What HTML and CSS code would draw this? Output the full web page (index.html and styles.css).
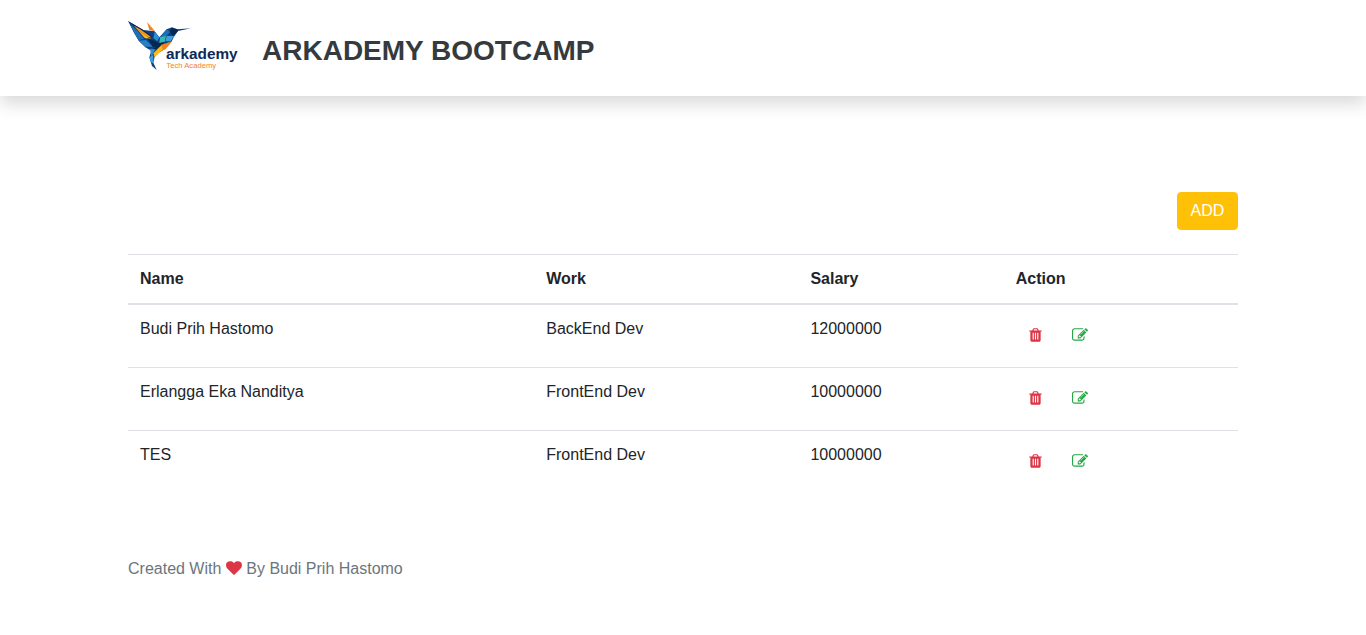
FILE: index.html
```html
<!DOCTYPE html>
<html lang="en">
<head>
<meta charset="utf-8">
<meta name="viewport" content="width=device-width, initial-scale=1">
<title>Arkademy Bootcamp</title>
<link rel="stylesheet" href="styles.css">
</head>
<body>
<svg class="sprite" aria-hidden="true">
  <symbol id="trash" viewBox="192 0 1408 1792"><path d="M704 1376v-704q0-14-9-23t-23-9h-64q-14 0-23 9t-9 23v704q0 14 9 23t23 9h64q14 0 23-9t9-23zm256 0v-704q0-14-9-23t-23-9h-64q-14 0-23 9t-9 23v704q0 14 9 23t23 9h64q14 0 23-9t9-23zm256 0v-704q0-14-9-23t-23-9h-64q-14 0-23 9t-9 23v704q0 14 9 23t23 9h64q14 0 23-9t9-23zm-544-992h448l-48-117q-7-9-17-11h-317q-10 2-17 11zm928 32v64q0 14-9 23t-23 9h-96v948q0 83-47 143.5t-113 60.5h-832q-66 0-113-58.5t-47-141.5v-952h-96q-14 0-23-9t-9-23v-64q0-14 9-23t23-9h309l70-167q15-37 54-63t79-26h320q40 0 79 26t54 63l70 167h309q14 0 23 9t9 23z"/></symbol>
  <symbol id="edit" viewBox="0 0 1792 1792"><path d="M888 1184l116-116-152-152-116 116v56h96v96h56zm440-720q-16-16-33 1l-350 350q-17 17-1 33t33-1l350-350q17-17 1-33zm80 594v190q0 119-84.5 203.5t-203.5 84.5h-832q-119 0-203.5-84.5t-84.5-203.5v-832q0-119 84.5-203.5t203.5-84.5h832q63 0 117 25 15 7 18 23 3 17-9 29l-49 49q-14 14-32 8-23-6-45-6h-832q-66 0-113 47t-47 113v832q0 66 47 113t113 47h832q66 0 113-47t47-113v-126q0-13 9-22l64-64q15-15 35-7t20 29zm-96-738l288 288-672 672h-288v-288zm444 132l-92 92-288-288 92-92q28-28 68-28t68 28l152 152q28 28 28 68t-28 68z"/></symbol>
  <symbol id="heart" viewBox="0 0 1792 1792"><path d="M896 1664q-26 0-44-18l-624-602q-10-8-27.5-26t-55.5-65.5-68-97.5-53.5-121-23.5-138q0-220 127-344t351-124q62 0 126.5 21.5t120 58 95.5 68.5 76 68q36-36 76-68t95.5-68.5 120-58 126.5-21.5q224 0 351 124t127 344q0 221-229 450l-623 600q-18 18-44 18z"/></symbol>
</svg>

<header class="navbar">
  <div class="container brand">
    <svg class="logo" viewBox="12 12 330 156" role="img" aria-label="arkademy Tech Academy">
      <!-- silhouette -->
      <path fill="#0e417c" d="M12 15L58 42L92 46L106 64L128 40L144 34L160 40L201 37L162 45L150 62L142 78L124 98L104 110L92 122L88 140L98 162L84 150L76 124L82 104L64 94L44 74L30 50Z"/>
      <!-- wing -->
      <path fill="#08264f" d="M12 15L58 42L86 62L72 62L44 40Z"/>
      <path fill="#f7941d" d="M30 29L52 42L82 64L66 62L46 48Z"/>
      <path fill="#fdb913" d="M46 48L66 60L82 70L62 66Z"/>
      <path fill="#1c6fb8" d="M18 24L40 44L60 68L44 72L30 50Z"/>
      <path fill="#2680c9" d="M44 74L66 72L86 92L64 92Z"/>
      <path fill="#08264f" d="M70 66L94 76L108 84L88 94Z"/>
      <!-- back feather -->
      <path fill="#f58220" d="M69 18L93 46L76 42Z"/>
      <path fill="#2d8fd5" d="M92 48L106 64L100 76L88 66Z"/>
      <!-- head -->
      <path fill="#1c6fb8" d="M108 64L128 40L138 48L128 60Z"/>
      <path fill="#08264f" d="M142 36L160 40L162 45L148 60L138 48Z"/>
      <!-- body -->
      <path fill="#35b9ad" d="M108 64L126 59L122 78L106 82Z"/>
      <path fill="#3a9ee0" d="M128 60L150 60L140 76L124 76Z"/>
      <path fill="#08264f" d="M102 82L122 78L108 92L86 104Z"/>
      <path fill="#f58220" d="M112 86L144 76L126 98L104 110Z"/>
      <path fill="#fdb913" d="M88 112L112 88L116 100L92 124Z"/>
      <!-- tail -->
      <path fill="#2d8fd5" d="M78 98L94 100L86 114L82 122Z"/>
      <path fill="#3a9ee0" d="M76 124L88 116L88 142L80 138Z"/>
      <text class="logo-name" x="126" y="130">arkademy</text>
      <text class="logo-tag" x="127" y="155">Tech Academy</text>
    </svg>
    <h1 class="title">ARKADEMY BOOTCAMP</h1>
  </div>
</header>

<main class="container content">
  <div class="toolbar">
    <button type="button" class="btn btn-add">ADD</button>
  </div>
  <table class="table">
    <thead>
      <tr>
        <th scope="col" class="col-name">Name</th>
        <th scope="col" class="col-work">Work</th>
        <th scope="col" class="col-salary">Salary</th>
        <th scope="col">Action</th>
      </tr>
    </thead>
    <tbody>
      <tr>
        <td>Budi Prih Hastomo</td>
        <td>BackEnd Dev</td>
        <td>12000000</td>
        <td><div class="actions">
          <button type="button" class="btn btn-delete" aria-label="Delete"><svg class="icon-trash"><use href="#trash"/></svg></button>
          <button type="button" class="btn btn-edit" aria-label="Edit"><svg class="icon"><use href="#edit"/></svg></button>
        </div></td>
      </tr>
      <tr>
        <td>Erlangga Eka Nanditya</td>
        <td>FrontEnd Dev</td>
        <td>10000000</td>
        <td><div class="actions">
          <button type="button" class="btn btn-delete" aria-label="Delete"><svg class="icon-trash"><use href="#trash"/></svg></button>
          <button type="button" class="btn btn-edit" aria-label="Edit"><svg class="icon"><use href="#edit"/></svg></button>
        </div></td>
      </tr>
      <tr>
        <td>TES</td>
        <td>FrontEnd Dev</td>
        <td>10000000</td>
        <td><div class="actions">
          <button type="button" class="btn btn-delete" aria-label="Delete"><svg class="icon-trash"><use href="#trash"/></svg></button>
          <button type="button" class="btn btn-edit" aria-label="Edit"><svg class="icon"><use href="#edit"/></svg></button>
        </div></td>
      </tr>
    </tbody>
  </table>
</main>

<footer class="container footer">Created With <svg class="icon icon-heart" role="img" aria-label="love"><use href="#heart"/></svg> By Budi Prih Hastomo</footer>
</body>
</html>
```
FILE: styles.css
```css
*, *::before, *::after { box-sizing: border-box; }

body {
  margin: 0;
  font-family: "Liberation Sans", Arial, sans-serif;
  font-size: 16px;
  line-height: 24px;
  color: #212529;
  background: #fff;
}

.sprite { display: none; }

.container {
  width: 100%;
  max-width: 1140px;
  margin: 0 auto;
  padding-left: 15px;
  padding-right: 15px;
}

.navbar {
  background: #fff;
  padding: 20px 0 24px;
  box-shadow: 0 8px 16px rgba(0, 0, 0, 0.15);
}

.brand {
  display: flex;
  align-items: center;
  gap: 24px;
}

.logo {
  width: 110px;
  height: 52px;
  flex: none;
  overflow: visible;
}

.logo-name {
  font-size: 46px;
  font-weight: 700;
  fill: #0b2a5b;
}

.logo-tag {
  font-size: 23px;
  fill: #f58220;
}

.title {
  margin: 10px 0 0;
  font-size: 28px;
  line-height: 34px;
  font-weight: 700;
  color: #343a40;
}

.content { padding-top: 96px; }

.toolbar {
  display: flex;
  justify-content: flex-end;
  margin-bottom: 24px;
}

.btn {
  padding: 6px 12px;
  border: 1px solid transparent;
  border-radius: 4px;
  background: transparent;
  font: inherit;
  cursor: pointer;
}

.btn-add {
  min-width: 61px;
  color: #fff;
  background: #ffc107;
  border-color: #ffc107;
}

.btn-delete { color: #dc3545; }
.btn-edit { color: #28a745; }

.table {
  width: 100%;
  border-collapse: collapse;
  table-layout: fixed;
}

.table th,
.table td {
  padding: 12px;
  text-align: left;
  vertical-align: top;
  border-top: 1px solid #dee2e6;
}

.table thead th { border-bottom: 2px solid #dee2e6; }

.col-name { width: 36.6%; }
.col-work { width: 23.8%; }
.col-salary { width: 18.5%; }

.actions {
  display: flex;
  gap: 4px;
}

.actions .btn {
  display: flex;
  align-items: center;
  height: 38px;
  padding-bottom: 8px;
}

.icon {
  width: 16px;
  height: 16px;
  fill: currentColor;
}

.icon-trash {
  width: 13px;
  height: 16px;
  fill: currentColor;
}

.icon-heart {
  color: #dc3545;
  vertical-align: -2px;
}

.footer {
  padding-top: 64px;
  padding-bottom: 48px;
  color: #6c757d;
}
```
